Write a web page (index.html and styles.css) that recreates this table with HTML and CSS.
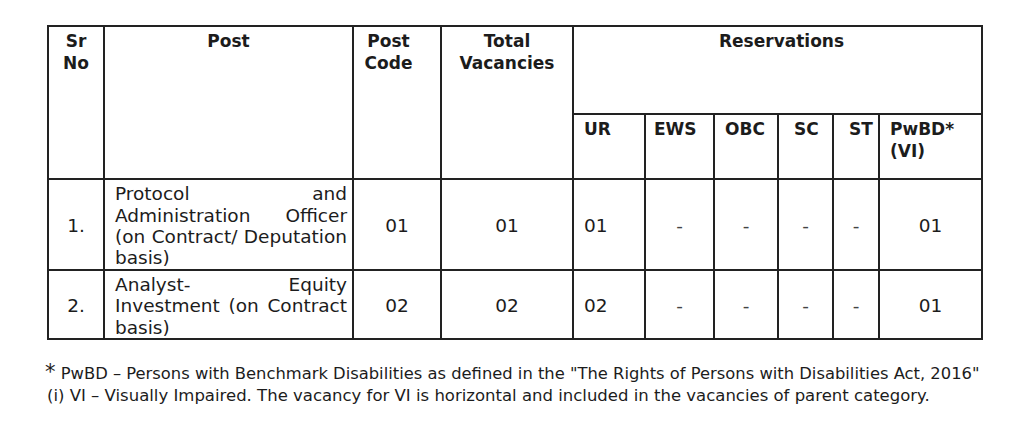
FILE: index.html
```html
<!DOCTYPE html>
<html lang="en">
<head>
<meta charset="utf-8">
<title>Vacancies</title>
<link rel="stylesheet" href="styles.css">
</head>
<body>
<div class="page">
  <table class="vac">
    <colgroup>
      <col class="c-sr"><col class="c-post"><col class="c-code"><col class="c-total">
      <col class="c-ur"><col class="c-ews"><col class="c-obc"><col class="c-sc"><col class="c-st"><col class="c-pwbd">
    </colgroup>
    <thead>
      <tr class="h1">
        <th rowspan="2" class="ctr">Sr<br>No</th>
        <th rowspan="2" class="ctr">Post</th>
        <th rowspan="2" class="ctr code">Post<br>Code</th>
        <th rowspan="2" class="ctr">Total<br>Vacancies</th>
        <th colspan="6" class="ctr res">Reservations</th>
      </tr>
      <tr class="h2">
        <th class="sub">UR</th>
        <th class="sub ews">EWS</th>
        <th class="sub">OBC</th>
        <th class="sub wide">SC</th>
        <th class="sub wide">ST</th>
        <th class="sub">PwBD*<br>(VI)</th>
      </tr>
    </thead>
    <tbody>
      <tr class="r1">
        <td class="ctr">1.</td>
        <td class="post">Protocol and Administration Officer (on Contract/ Deputation basis)</td>
        <td class="ctr">01</td>
        <td class="ctr">01</td>
        <td class="left">01</td>
        <td class="ctr dash">-</td>
        <td class="ctr dash">-</td>
        <td class="ctr dash">-</td>
        <td class="ctr dash">-</td>
        <td class="ctr">01</td>
      </tr>
      <tr class="r2">
        <td class="ctr">2.</td>
        <td class="post">Analyst- Equity Investment (on Contract basis)</td>
        <td class="ctr">02</td>
        <td class="ctr">02</td>
        <td class="left">02</td>
        <td class="ctr dash">-</td>
        <td class="ctr dash">-</td>
        <td class="ctr dash">-</td>
        <td class="ctr dash">-</td>
        <td class="ctr">01</td>
      </tr>
    </tbody>
  </table>
  <div class="notes">
    <p class="note n1"><span class="star">*</span> PwBD – Persons with Benchmark Disabilities as defined in the "The Rights of Persons with Disabilities Act, 2016"</p>
    <p class="note n2">(i) VI – Visually Impaired. The vacancy for VI is horizontal and included in the vacancies of parent category.</p>
  </div>
</div>
</body>
</html>
```

FILE: styles.css
```css
html, body {
  margin: 0;
  padding: 0;
  background: #ffffff;
}

.page {
  padding: 25px 0 0 47px;
  font-family: "DejaVu Sans", "Verdana", sans-serif;
  color: #1c1c1c;
}

.vac {
  border-collapse: collapse;
  table-layout: fixed;
  width: 936px;
}

.vac th, .vac td {
  border: 2px solid #222222;
  vertical-align: top;
}

.c-sr { width: 56px; }
.c-post { width: 249px; }
.c-code { width: 88px; }
.c-total { width: 132px; }
.c-ur { width: 72px; }
.c-ews { width: 69px; }
.c-obc { width: 64px; }
.c-sc { width: 55px; }
.c-st { width: 46px; }
.c-pwbd { width: 103px; }

.vac th {
  font-weight: bold;
  font-size: 17px;
  line-height: 22px;
  padding: 3px 2px 0 2px;
}

.h1 { height: 88px; }
.h2 { height: 65px; }

.vac th.ctr { text-align: center; }
.vac th.code { padding-left: 2px; padding-right: 19px; }
.vac th.res { padding-left: 10px; }

.vac th.sub {
  text-align: left;
  padding: 3px 2px 0 10px;
}
.vac th.sub.ews { padding-left: 8px; }
.vac th.sub.wide { padding-left: 15px; }

.vac td {
  font-size: 18.5px;
  line-height: 21.3px;
  padding: 3px 4px 0 4px;
  vertical-align: middle;
}

.r1 { height: 91px; }
.r2 { height: 68px; }

.vac td.ctr { text-align: center; }
.vac td.left { text-align: left; padding-left: 10px; }
.vac td.post {
  text-align: justify;
  padding: 3px 5px 0 10px;
}
.vac td.dash { color: #444444; }

.notes {
  padding-top: 23px;
}

.note {
  margin: 0;
  font-size: 16.5px;
  line-height: 22px;
  color: #1c1c1c;
}

.note.n1 {
  font-size: 16.35px;
}

.star {
  font-size: 21px;
  line-height: 15px;
  margin-left: -2px;
}
```
